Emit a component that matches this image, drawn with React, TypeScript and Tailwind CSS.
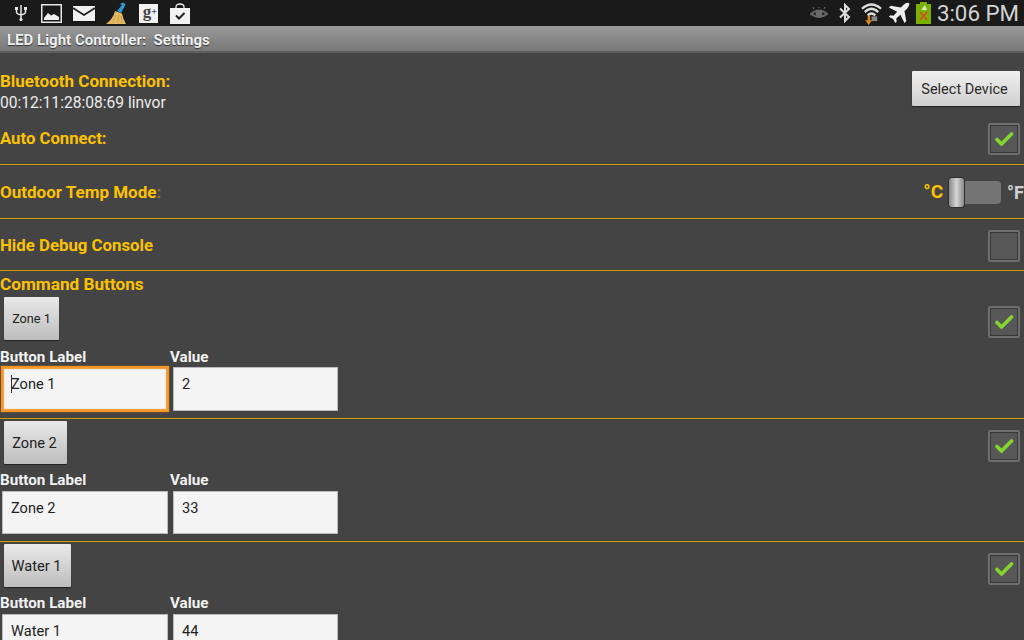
import { Fragment } from "react";

const Check = ({ on }: { on: boolean }) => (
  <div className="w-[32px] h-[32px] border-2 border-[#6e6e6e] bg-[#575757] rounded-[2px] flex items-center justify-center shrink-0 shadow-[inset_0_0_0_1px_#383838]">
    {on && (
      <svg width="20" height="16" viewBox="0 0 20 16">
        <path d="M3 8.5 L7.5 13 L17.5 3" fill="none" stroke="#84d62f" strokeWidth="3.6" strokeLinecap="round" strokeLinejoin="round" />
      </svg>
    )}
  </div>
);

const Divider = () => <div className="h-px bg-[#c9a000]" />;

const commands = [
  { label: "Zone 1", value: "2", focus: true, small: true, wide: "w-[55px]" },
  { label: "Zone 2", value: "33", focus: false, small: false, wide: "w-[63px]" },
  { label: "Water 1", value: "44", focus: false, small: false, wide: "w-[67px]" },
];

const CommandRow = ({ label, value, focus, small, wide }: { label: string; value: string; focus: boolean; small: boolean; wide: string }) => (
  <div className="h-[122px] first:h-[123px] pt-[2px]">
    <div className="flex justify-between items-start px-[4px]">
      <button className={`h-[43px] bg-gradient-to-b from-[#e9e9e9] to-[#bdbdbd] text-[#222] rounded-[1px] shadow-[0_1px_1px_#222] ${wide} ${small ? "text-[12.7px]" : "text-[14.6px] pt-[2px] pr-[2px]"}`}>
        {label}
      </button>
      <div className="mt-[9px]">
        <Check on />
      </div>
    </div>
    <div className={`flex text-[15.2px] font-bold leading-[16px] text-[#f2f2f2] ${focus ? "mt-[9px]" : "mt-[8px]"}`}>
      <span className="w-[170px]">Button Label</span>
      <span>Value</span>
    </div>
    <div className={`flex gap-[5px] pl-[2px] ${focus ? "mt-[2px]" : "mt-[3px]"}`}>
      <div className={`relative w-[166px] bg-[#f4f4f4] text-[#222] text-[14.6px] ${focus ? "h-[44px] pl-[9px] pt-[7px] shadow-[0_0_1px_1px_#f5921e,inset_0_0_1px_2px_#f59a30]" : "h-[43px] pl-[8px] pt-[6px] border border-[#bbb]"}`}>
        {focus && <span className="absolute left-[9px] top-[8px] w-px h-[18px] bg-[#333]" />}
        {label}
      </div>
      <div className={`w-[165px] bg-[#f4f4f4] border border-[#bbb] text-[#222] text-[14.6px] pl-[8px] pt-[6px] ${focus ? "h-[44px]" : "h-[43px]"}`}>{value}</div>
    </div>
  </div>
);

export default function App() {
  return (
    <div className="w-[1024px] h-[640px] overflow-hidden bg-[#444444] font-['Roboto',sans-serif]">
      {/* status bar */}
      <div className="h-[26px] bg-[#1a1a1a] flex items-center justify-between pl-[14px] pr-[5px]">
        <div className="flex items-center">
          <svg width="14" height="18" viewBox="0 0 14 18" fill="none" stroke="#e6e6e6" strokeWidth="1.5">
            <path d="M7 1 V17 M2.5 5 V8 Q2.5 10 7 11 Q11.5 10 11.5 8 V5" />
            <rect x="1" y="3" width="3" height="3" fill="#e6e6e6" stroke="none" />
            <rect x="10" y="3" width="3" height="3" fill="#e6e6e6" stroke="none" />
            <circle cx="7" cy="15.5" r="1.6" fill="#e6e6e6" stroke="none" />
          </svg>
          <svg width="21" height="19" viewBox="0 0 21 19" className="ml-[13px]">
            <rect x="0.75" y="0.75" width="19.5" height="17.5" fill="#1a1a1a" stroke="#e6e6e6" strokeWidth="1.5" />
            <path d="M3 14 L7 9 L10 11.5 L13 10 L18 13 V16 H3 Z" fill="#eee" />
          </svg>
          <svg width="22" height="15" viewBox="0 0 22 15" className="ml-[11px]">
            <rect width="22" height="15" fill="#f2f2f2" />
            <path d="M0 2 L11 9 L22 2" fill="none" stroke="#1a1a1a" strokeWidth="1.5" />
          </svg>
          <svg width="20" height="22" viewBox="0 0 20 22" className="ml-[11px]">
            <path d="M11 9 L16 3 L14 2 L17 0.5 L19.5 2.5 L15 11 Z" fill="#2e9bd6" />
            <path d="M9 9 L16 11.5 Q17 17 20 22 H0 Q7 17 9 9 Z" fill="#e3b865" />
            <path d="M7 21 L10 13 M12 21 L13 13 M16 21 L15 14" stroke="#c9983f" strokeWidth="0.8" />
          </svg>
          <div className="ml-[13px] w-[19px] h-[19px] bg-[#f2f2f2] text-[#444] text-[17px] leading-[16px] pr-[3px] text-center font-['Liberation_Serif',serif] font-bold relative">
            g
            <span className="absolute right-[1px] top-[3px] text-[10px] leading-[10px]">+</span>
          </div>
          <svg width="20" height="21" viewBox="0 0 20 21" className="ml-[12px]">
            <path d="M6 6 V4 Q6 1 10 1 Q14 1 14 4 V6" fill="none" stroke="#eee" strokeWidth="1.3" />
            <rect y="5" width="20" height="16" fill="#f2f2f2" />
            <path d="M6 12.5 L9 15.5 L14.5 10" fill="none" stroke="#222" strokeWidth="2" />
          </svg>
        </div>
        <div className="flex items-center">
          <svg width="18" height="12" viewBox="0 0 18 12" className="mr-[11px]">
            <path d="M1 7 Q9 0 17 7 Q9 13 1 7 Z" fill="none" stroke="#6a6a6a" strokeWidth="2" />
            <circle cx="9" cy="6.5" r="3.4" fill="#6a6a6a" />
            <path d="M4 2 L3 0 M9 1 V0 M14 2 L15 0" stroke="#6a6a6a" strokeWidth="1.2" />
          </svg>
          <svg width="12" height="20" viewBox="0 0 12 20" fill="none" stroke="#ddd" strokeWidth="2" className="mr-[10px]">
            <path d="M1 5.5 L10 14 L6 18 V2 L10 6 L1 14.5" />
          </svg>
          <svg width="21" height="23" viewBox="0 0 22 24" fill="none" className="mr-[6px]">
            <path d="M1 7 Q11 -2 21 7" stroke="#ddd" strokeWidth="2.4" />
            <path d="M4 10.5 Q11 3.5 18 10.5" stroke="#ddd" strokeWidth="2.4" />
            <path d="M7 14 Q11 10 15 14" stroke="#ddd" strokeWidth="2.4" />
            <path d="M11 15 H17 V20 H11 Z" fill="#888" />
            <path d="M7 14 V19 H4.5 L8 24 L11.5 19 H9.5 V14 Z" fill="#e08a1e" />
          </svg>
          <svg width="22" height="22" viewBox="0 0 24 24" className="mr-[6px]">
            <path d="M23 1 Q20 0 17 3 L14 6 L3 4 L1 6 L10 10.5 L6 15 L2.5 14.5 L1 16 L5.5 18.5 L8 23 L9.5 21.5 L9 18 L13.5 14 L18 23 L20 21 L18 10 L21 7 Q24 3 23 1 Z" fill="#eee" />
          </svg>
          <div className="relative w-[15px] h-[20px] bg-[#7ab000] mr-[6px] mt-[2px]">
            <div className="absolute -top-[2px] left-[4px] w-[7px] h-[2px] bg-[#7ab000]" />
            <svg width="15" height="20" viewBox="0 0 15 20" className="absolute left-0 top-0">
              <path d="M9 1 L5 6 H11 Z" fill="#d8e8c0" />
              <path d="M4 8 L11 16 M11 8 L4 16" stroke="#e0452a" strokeWidth="1.6" />
            </svg>
          </div>
          <span className="text-[#d4d4d4] text-[22.3px] leading-[26px]">3:06 PM</span>
        </div>
      </div>

      {/* title bar */}
      <div className="h-[27px] bg-gradient-to-b from-[#9a9a9a] to-[#787878] border-b-2 border-[#5e5e5e] pl-[7px] pt-[3px] flex items-center">
        <span className="text-[#efefef] text-[15px] font-bold whitespace-pre [text-shadow:0_1px_1px_#333]">LED Light Controller:  Settings</span>
      </div>

      {/* bluetooth */}
      <div className="h-[111px] flex justify-between text-[#fcc200] font-bold text-[17px]">
        <div className="pt-[18px]">
          <div className="leading-[20px]">Bluetooth Connection:</div>
          <div className="text-[#ececec] text-[15.6px] font-normal leading-[20px] mt-[2px]">00:12:11:28:08:69 linvor</div>
          <div className="leading-[20px] text-[16.7px] mt-[16px]">Auto Connect:</div>
        </div>
        <div className="flex flex-col items-end pr-[4px] pt-[18px]">
          <button className="w-[108px] h-[35px] pt-[2px] pr-[3px] bg-gradient-to-b from-[#f0f0f0] to-[#cfcfcf] text-[#2a2a2a] text-[14.5px] font-normal rounded-[1px] shadow-[0_1px_1px_#222]">Select Device</button>
          <div className="mt-[17px]"><Check on /></div>
        </div>
      </div>
      <Divider />

      <div className="h-[53px] pt-[2px] flex items-center justify-between text-[#fcc200] font-bold text-[17px]">
        <span>Outdoor Temp Mode<span className="opacity-40">:</span></span>
        <div className="flex items-center font-bold">
          <span className="text-[19px]">°C</span>
          <div className="relative w-[53px] h-[23px] bg-[#747474] rounded-[4px] ml-[5px]">
            <div className="absolute left-[1px] -top-[3px] w-[15px] h-[29px] rounded-[3px] bg-gradient-to-r from-[#8a8a8a] via-[#d4d4d4] to-[#8a8a8a] shadow-[0_0_0_1px_#2f2f2f]" />
          </div>
          <span className="text-[#d0d0d0] text-[18px] ml-[6px] whitespace-nowrap">°F</span>
        </div>
      </div>
      <Divider />

      <div className="h-[51px] pt-[2px] flex items-center justify-between pr-[4px] text-[#fcc200] font-bold text-[16.8px]">
        <span>Hide Debug Console</span>
        <Check on={false} />
      </div>
      <Divider />

      <div className="text-[#fcc200] font-bold text-[17.2px] leading-[21px] mt-[3px]">Command Buttons</div>
      <div>
        {commands.map((c, i) => (
          <Fragment key={c.label}>
            {i > 0 && <Divider />}
            <CommandRow {...c} />
          </Fragment>
        ))}
      </div>
    </div>
  );
}
